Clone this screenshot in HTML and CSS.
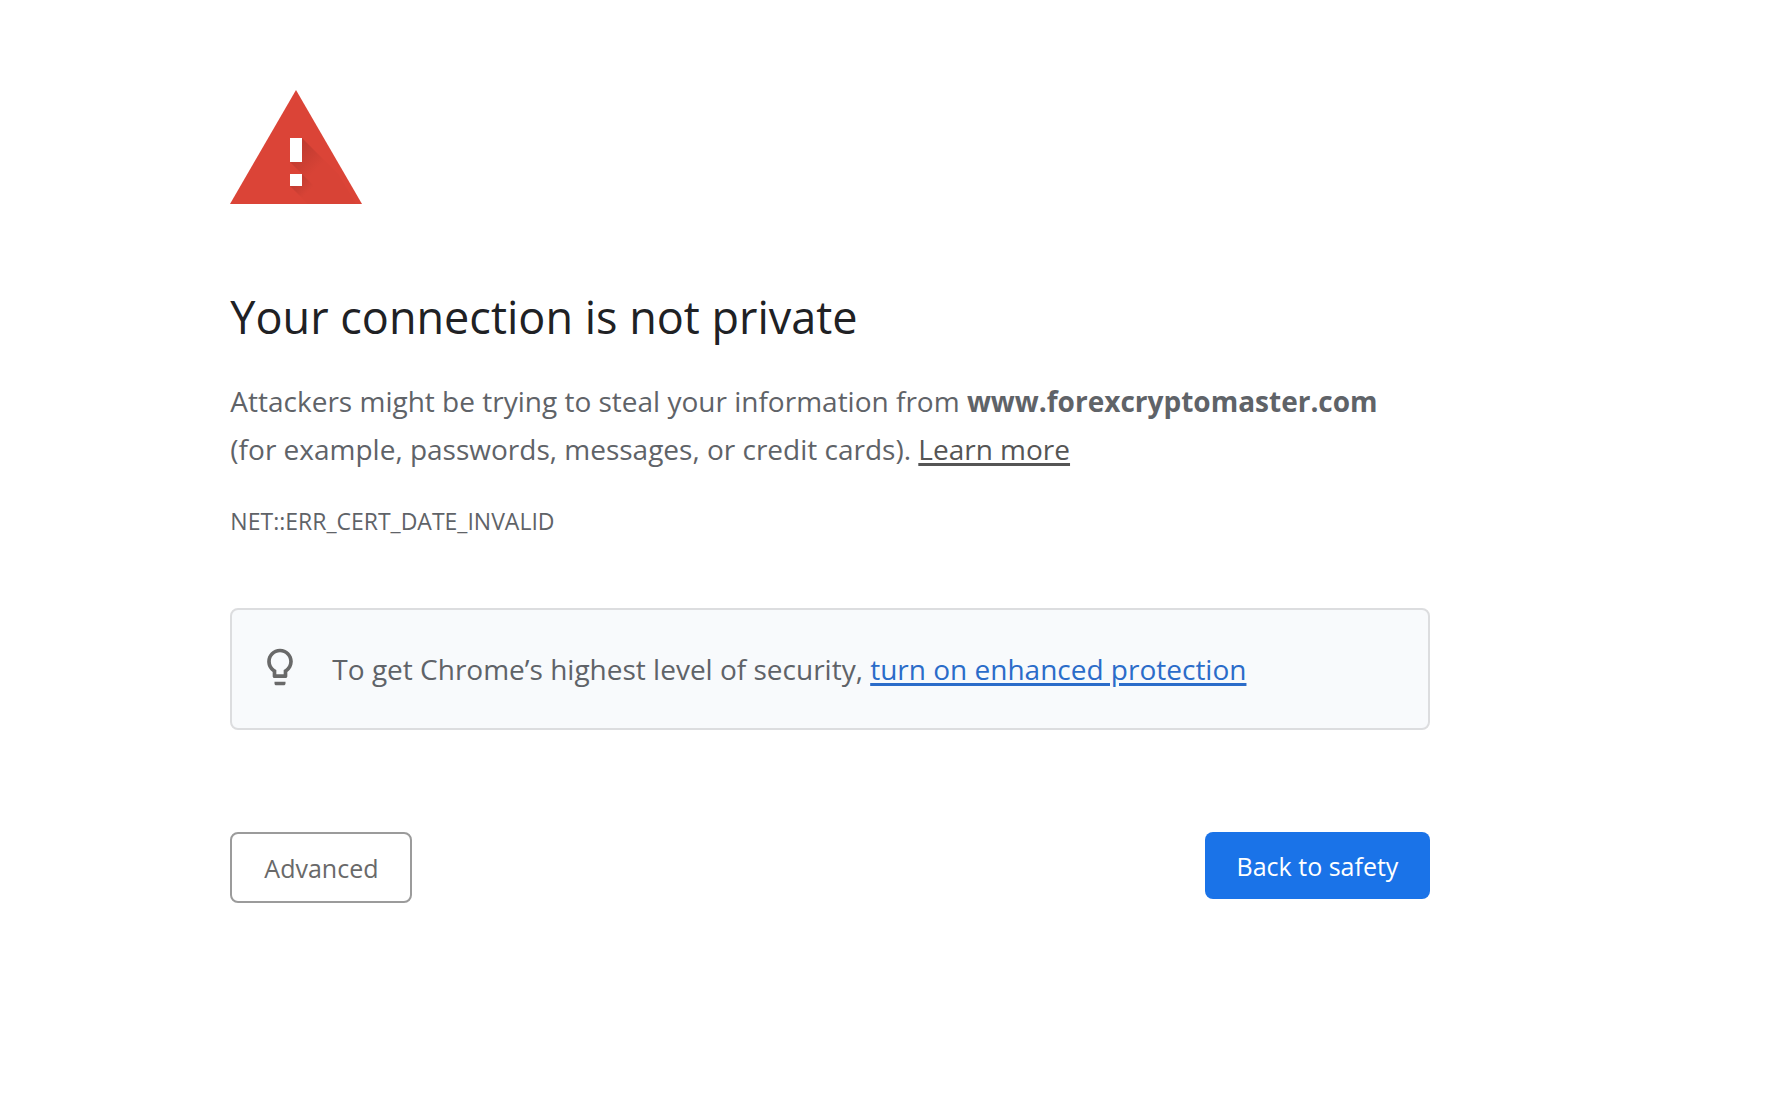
FILE: index.html
```
<!DOCTYPE html>
<html lang="en">
  <head>
    <meta charset="utf-8" />
    <meta name="viewport" content="width=device-width, initial-scale=1" />
    <title>Privacy error</title>
    <link rel="stylesheet" href="styles.css">
  </head>
  <body>
    <main class="interstitial">
      <svg class="warning-icon" viewBox="0 0 132 114" aria-hidden="true">
        <defs>
          <!-- Long shadow fades out towards the bottom right -->
          <linearGradient id="shadow" gradientUnits="userSpaceOnUse" x1="66" y1="60" x2="86" y2="80">
            <stop offset="0" stop-color="#bf3b30" />
            <stop offset="1" stop-color="#d84336" />
          </linearGradient>
          <linearGradient id="dotShadow" gradientUnits="userSpaceOnUse" x1="66" y1="90" x2="78" y2="102">
            <stop offset="0" stop-color="#bf3b30" />
            <stop offset="1" stop-color="#d84336" />
          </linearGradient>
        </defs>
        <path fill="#db4437" d="M66 0l66 114H0z" />
        <path fill="url(#shadow)" d="M72 48l37 37 17 29H102L60 72z" />
        <path fill="url(#dotShadow)" d="M72 84l30 30H78L60 96z" />
        <path fill="#fff" d="M60 48h12v24H60zM60 84h12v12H60z" />
      </svg>

      <h1>Your connection is not private</h1>
      <p class="message">
        Attackers might be trying to steal your information from
        <strong>www.forexcryptomaster.com</strong>
        <span>(for example, passwords, messages, or credit cards). <a href="#">Learn more</a></span>
      </p>
      <div class="error-code">NET::ERR_CERT_DATE_INVALID</div>

      <div class="promo">
        <svg class="bulb-icon" viewBox="0 0 24 24" aria-hidden="true">
          <path fill="#696969" d="M9 21c0 .5.4 1 1 1h4c.6 0 1-.5 1-1v-1H9v1zm3-19C8.100 2 5 5.100 5 9c0 2.400 1.200 4.500 3 5.700V17c0 .5.4 1 1 1h6c.6 0 1-.5 1-1v-2.300c1.800-1.300 3-3.400 3-5.700 0-3.900-3.100-7-7-7zm2.900 11.100l-.9.6V16h-4v-2.300l-.9-.6C7.800 12.200 7 10.600 7 9c0-2.800 2.200-5 5-5s5 2.200 5 5c0 1.600-.8 3.200-2.100 4.100z" />
        </svg>
        <p>To get Chrome’s highest level of security, <a href="#">turn on enhanced protection</a></p>
      </div>

      <div class="buttons">
        <button type="button" class="secondary">Advanced</button>
        <button type="button" class="primary">Back to safety</button>
      </div>
    </main>
  </body>
</html>
```
FILE: styles.css
```
* {
  box-sizing: border-box;
}

body {
  margin: 0;
  background-color: #fff;
  color: #5f6368;
  font-family: "Segoe UI", "Open Sans", "Noto Sans", sans-serif;
  font-size: 28px;
  line-height: 48px;
}

.interstitial {
  max-width: 1200px;
  margin: 90px 13% 0;
}

.warning-icon {
  display: block;
  width: 132px;
  height: 114px;
}

h1 {
  margin: 84px 0 31px;
  color: #202124;
  font-size: 45px;
  font-weight: 400;
  line-height: 58px;
}

p {
  margin: 0;
}

.message span {
  display: block;
}

.message a {
  color: #555;
}

a {
  text-decoration-thickness: 3px;
  text-underline-offset: 3px;
}

.error-code {
  margin-top: 24px;
  font-size: 23px;
}

.promo {
  display: flex;
  align-items: flex-start;
  gap: 30px;
  margin-top: 63px;
  padding: 35px 26px;
  border: 2px solid #dcdddf;
  border-radius: 8px;
  background-color: #f8fafc;
}

.promo a {
  color: #2b6cc9;
}

.bulb-icon {
  flex: none;
  width: 44px;
  height: 44px;
}

.buttons {
  display: flex;
  justify-content: space-between;
  align-items: flex-start;
  margin-top: 102px;
}

button {
  padding: 17px 32px 15px;
  border-radius: 8px;
  font-family: inherit;
  font-size: 25px;
  line-height: 35px;
  cursor: pointer;
}

.secondary {
  border: 2px solid #9b9b9b;
  background-color: #fff;
  color: #696969;
}

.primary {
  border: 0;
  background-color: #1a73e8;
  color: #fff;
}
```
